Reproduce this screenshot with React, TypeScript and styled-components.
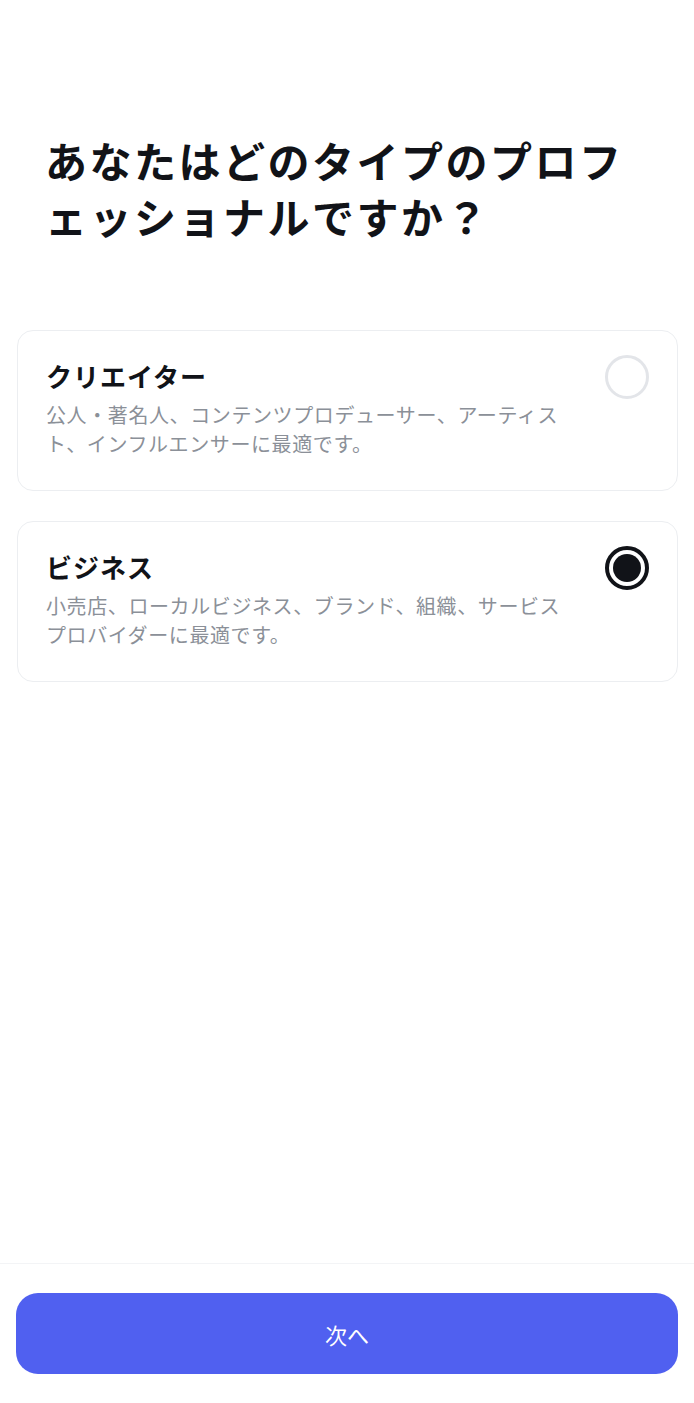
import { useState } from "react";
import styled, { createGlobalStyle } from "styled-components";

const GlobalStyle = createGlobalStyle`
  html, body {
    margin: 0;
    padding: 0;
    background: #ffffff;
  }
  body {
    font-family: "Noto Sans CJK JP", "Noto Sans", sans-serif;
    color: #111318;
  }
`;

const Layout = styled.div`
  width: 100%;
  min-height: 1403px;
  display: flex;
  flex-direction: column;
  box-sizing: border-box;
`;

const Content = styled.main`
  flex: 1;
  display: flex;
  flex-direction: column;
  padding: 132px 16px 0 17px;
`;

const Title = styled.h1`
  margin: 0 0 86px;
  padding: 0 16px 0 28px;
  font-size: 42px;
  line-height: 56px;
  font-weight: 700;
  letter-spacing: 2.5px;
  color: #111318;
`;

const OptionList = styled.div`
  display: flex;
  flex-direction: column;
  gap: 30px;
`;

const Card = styled.button`
  display: flex;
  align-items: flex-start;
  gap: 32px;
  width: 100%;
  padding: 28px 28px 32px 28px;
  border: 1px solid #eceef1;
  border-radius: 16px;
  background: #ffffff;
  text-align: left;
  font-family: inherit;
  cursor: pointer;
  box-sizing: border-box;
`;

const CardText = styled.div`
  flex: 1;
  display: flex;
  flex-direction: column;
  gap: 7px;
`;

const CardTitle = styled.div`
  font-size: 26px;
  line-height: 34px;
  font-weight: 700;
  letter-spacing: 1px;
  color: #111318;
`;

const CardDesc = styled.div`
  font-size: 20px;
  line-height: 29px;
  letter-spacing: 0.6px;
  color: #8b9098;
`;

const Radio = styled.span<{ $checked: boolean }>`
  flex: none;
  width: 44px;
  height: 44px;
  margin-top: -4px;
  border-radius: 50%;
  box-sizing: border-box;
  border: ${(p) => (p.$checked ? "4px solid #111318" : "3px solid #e3e5e9")};
  display: flex;
  align-items: center;
  justify-content: center;
  &::after {
    content: "";
    width: 28px;
    height: 28px;
    border-radius: 50%;
    background: #111318;
    display: ${(p) => (p.$checked ? "block" : "none")};
  }
`;

const Footer = styled.footer`
  border-top: 1px solid #f3f4f6;
  padding: 29px 16px 29px 16px;
`;

const NextButton = styled.button`
  width: 100%;
  height: 81px;
  border: none;
  border-radius: 22px;
  background: #5060f0;
  color: #ffffff;
  font-family: inherit;
  font-size: 22px;
  font-weight: 400;
  cursor: pointer;
`;

const options = [
  {
    id: "creator",
    title: "クリエイター",
    desc: "公人・著名人、コンテンツプロデューサー、アーティスト、インフルエンサーに最適です。",
  },
  {
    id: "business",
    title: "ビジネス",
    desc: "小売店、ローカルビジネス、ブランド、組織、サービスプロバイダーに最適です。",
  },
];

export default function App() {
  const [selected, setSelected] = useState("business");

  return (
    <Layout>
      <GlobalStyle />
      <Content>
        <Title>あなたはどのタイプのプロフェッショナルですか？</Title>
        <OptionList>
          {options.map((o) => (
            <Card key={o.id} onClick={() => setSelected(o.id)}>
              <CardText>
                <CardTitle>{o.title}</CardTitle>
                <CardDesc>{o.desc}</CardDesc>
              </CardText>
              <Radio $checked={selected === o.id} />
            </Card>
          ))}
        </OptionList>
      </Content>
      <Footer>
        <NextButton>次へ</NextButton>
      </Footer>
    </Layout>
  );
}
